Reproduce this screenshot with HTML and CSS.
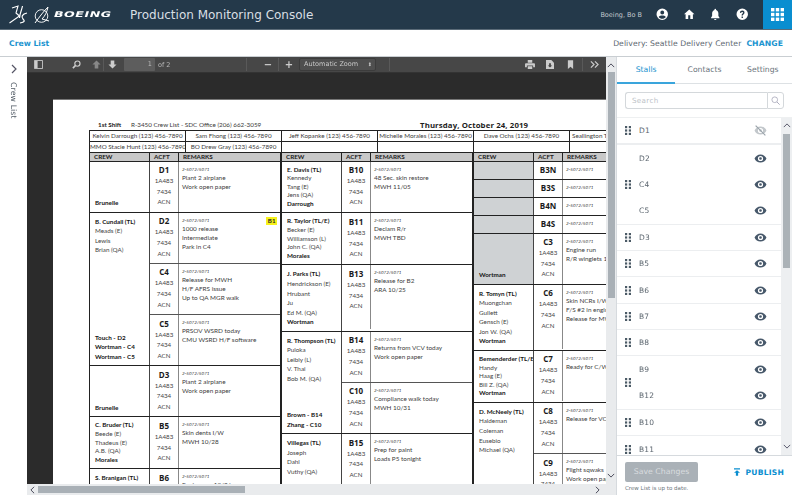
FILE: index.html
```html
<!DOCTYPE html>
<html lang="en">
<head>
<meta charset="utf-8">
<title>Production Monitoring Console</title>
<link rel="stylesheet" href="styles.css">
</head>
<body>
<svg class="defs" width="0" height="0" aria-hidden="true">
  <symbol id="eye" viewBox="0 0 24 24"><path fill="currentColor" d="M12 4.500C7 4.500 2.700 7.600 1 12c1.700 4.400 6 7.500 11 7.500s9.300-3.100 11-7.500c-1.700-4.400-6-7.500-11-7.500zm0 12.300a4.800 4.800 0 1 1 0-9.600 4.800 4.800 0 0 1 0 9.600zm0-7.300a2.500 2.500 0 1 0 0 5 2.500 2.500 0 0 0 0-5z"/></symbol>
  <symbol id="grip" viewBox="0 0 6 9"><g fill="currentColor"><rect width="2.200" height="2.200"/><rect x="3.800" width="2.200" height="2.200"/><rect y="3.400" width="2.200" height="2.200"/><rect x="3.800" y="3.400" width="2.200" height="2.200"/><rect y="6.800" width="2.200" height="2.200"/><rect x="3.800" y="6.800" width="2.200" height="2.200"/></g></symbol>
</svg>

<header class="topbar">
  <div class="brand">
    <svg class="logo-ds" viewBox="0 0 20 19"><path d="M4 3 10 1 8 8l3.500 3L1.500 18" fill="none" stroke="#fff" stroke-width="1.100"/><path d="M14.500 1C13.500 6 11.500 9 11.500 13M19 8c-5 1-6 4-4 6 2 2 2 3-3 4" fill="none" stroke="#fff" stroke-width="1.200"/></svg>
    <svg class="logo-b" viewBox="0 0 15 18"><circle cx="7.500" cy="10" r="6.300" fill="none" stroke="#fff" stroke-width=".9"/><path d="M1 17C6 10 10 5 14 1c-1 5-3 9-6 12l7 2" fill="none" stroke="#fff" stroke-width="1"/></svg>
    <span class="wordmark">BOEING</span>
  </div>
  <h1 class="app-title">Production Monitoring Console</h1>
  <span class="user-name">Boeing, Bo B</span>
  <nav class="top-icons">
    <svg viewBox="0 0 24 24"><path fill="#fff" d="M12 1a11 11 0 1 0 0 22 11 11 0 0 0 0-22zm0 4a3.700 3.700 0 1 1 0 7.400A3.700 3.700 0 0 1 12 5zm0 15.500c-2.800 0-5.300-1.300-6.900-3.400 1.300-1.700 4.400-2.600 6.900-2.600s5.600.9 6.900 2.600c-1.600 2.100-4.100 3.400-6.900 3.400z"/></svg>
    <svg viewBox="0 0 24 24"><path fill="#fff" d="M10 21v-7h4v7h5v-9h3L12 3 2 12h3v9z"/></svg>
    <svg viewBox="0 0 24 24"><path fill="#fff" d="M12 23a2.500 2.500 0 0 0 2.400-2H9.600a2.500 2.500 0 0 0 2.400 2zm8-5-2-2.500V10c0-3.100-1.900-5.600-4.500-6.300V3a1.500 1.500 0 0 0-3 0v.7C7.900 4.400 6 6.900 6 10v5.500L4 18v1.500h16z"/></svg>
    <svg viewBox="0 0 24 24"><path fill="#fff" d="M12 1a11 11 0 1 0 0 22 11 11 0 0 0 0-22zm1.300 18h-2.600v-2.600h2.600zm2.400-8c-.9 1.200-2.400 1.700-2.400 3.600h-2.600c0-3 1.900-3.700 2.700-4.800.6-.8.300-2.300-1.400-2.300-1.500 0-2 1.200-2.100 2.100L7.500 9c.3-2.300 2-4.100 4.500-4.100 3.900 0 5.300 3.700 3.700 6.100z"/></svg>
  </nav>
  <div class="app-tile">
    <svg viewBox="0 0 13 13"><g fill="#fff"><rect width="3.400" height="3.400"/><rect x="4.800" width="3.400" height="3.400"/><rect x="9.600" width="3.400" height="3.400"/><rect y="4.800" width="3.400" height="3.400"/><rect x="4.800" y="4.800" width="3.400" height="3.400"/><rect x="9.600" y="4.800" width="3.400" height="3.400"/><rect y="9.600" width="3.400" height="3.400"/><rect x="4.800" y="9.600" width="3.400" height="3.400"/><rect x="9.600" y="9.600" width="3.400" height="3.400"/></g></svg>
  </div>
</header>

<div class="subbar">
  <a class="crumb">Crew List</a>
  <span class="delivery">Delivery: Seattle Delivery Center</span>
  <a class="change">CHANGE</a>
</div>

<main class="workspace">
  <aside class="rail">
    <svg class="rail-chevron" viewBox="0 0 8 10"><path d="M2 1l4 4-4 4" fill="none" stroke="#556" stroke-width="1.200"/></svg>
    <span class="rail-label">Crew List</span>
  </aside>

  <section class="viewer">
    <div class="pdf-bar">
      <svg class="pi pi-side" viewBox="0 0 10 10"><path fill="none" stroke="#ccc" d="M.5.5h9v9h-9z"/><path fill="#ccc" d="M1 1h3v8H1z"/></svg>
      <svg class="pi pi-find" viewBox="0 0 10 10"><circle cx="6" cy="4" r="2.900" fill="none" stroke="#ccc" stroke-width="1.300"/><path d="M4 6 1 9" stroke="#ccc" stroke-width="1.800"/></svg>
      <svg class="pi pi-up" viewBox="0 0 10 10"><path fill="#888" d="M5 .5 9.500 5H7v4.500H3V5H.5z"/></svg>
      <i class="pdf-sep"></i>
      <svg class="pi pi-down" viewBox="0 0 10 10"><path fill="#ccc" d="M5 9.500 9.500 5H7V.5H3V5H.5z"/></svg>
      <span class="page-input">1</span>
      <span class="page-of">of 2</span>
      <i class="pdf-sep sep-zoom"></i>
      <span class="zoom-btn zoom-minus">−</span>
      <i class="pdf-sep"></i>
      <span class="zoom-btn">+</span>
      <span class="zoom-select">Automatic Zoom<b>⬍</b></span>
      <i class="pdf-sep sep-right"></i>
      <svg class="pi pi-print" viewBox="0 0 11 10"><path fill="#ccc" d="M3 0h5v3H3zM1 3.500h9a1 1 0 0 1 1 1V8H9V6H2v2H0V4.500a1 1 0 0 1 1-1zM3 7h5v3H3z"/></svg>
      <svg class="pi pi-save" viewBox="0 0 9 10"><path fill="#ccc" d="M0 0h6l3 3v7H0z"/><path fill="#444" d="M3.500 3.500h2V6H7L4.500 8.500 2 6h1.500z"/></svg>
      <svg class="pi pi-mark" viewBox="0 0 8 10"><path fill="#ccc" d="M1 0h6v10L4 7.500 1 10z"/></svg>
      <i class="pdf-sep"></i>
      <svg class="pi pi-more" viewBox="0 0 10 10"><path d="M1 1.500 4.500 5 1 8.500M5.500 1.500 9 5 5.500 8.500" fill="none" stroke="#ccc" stroke-width="1.300"/></svg>
    </div>

    <div class="pdf-area">
      <article class="sheet">
        <div class="sheet-title">
          <b class="shift">1st Shift</b>
          <span class="list-name">R-3450 Crew List - SDC Office (206) 662-3059</span>
          <b class="sheet-date">Thursday, October 24, 2019</b>
        </div>
        <div class="contacts">
          <div class="contact-row">
            <span class="c1">Kelvin Darrough (123) 456-7890</span><span class="c2">Sam Fhong (123) 456-7890</span><span class="c3">Jeff Kopanke (123) 456-7890</span><span class="c4">Michelle Morales (123) 456-7890</span><span class="c5">Dave Ochs (123) 456-7890</span><span class="c6">Seallington T</span>
          </div>
          <div class="contact-row">
            <span class="c1">MMO Stacie Hunt (123) 456-7890</span><span class="c2">BO Drew Gray (123) 456-7890</span><span class="c3"></span><span class="c4"></span><span class="c5"></span><span class="c6"></span>
          </div>
        </div>
        <div class="board">
          <div class="col">
            <div class="col-head"><span>CREW</span><span>ACFT</span><span>REMARKS</span></div>

            <div class="group">
              <div class="crew"><i class="sp"></i><b>Brunelle</b></div>
              <div class="stalls">
                <div class="stall">
                  <div class="acft"><b>D1</b><span>1A483</span><span>7434</span><span>ACN</span></div>
                  <div class="rem"><em>2-5072/5071</em><span>Plant 2 airplane</span><span>Work open paper</span></div>
                </div>
              </div>
            </div>

            <div class="group">
              <div class="crew crew-wide"><b>B. Cundall (TL)</b><span>Meads (E)</span><span>Lewis</span><span>Brian (QA)</span><i class="sp"></i><b>Touch - D2</b><b>Wortman - C4</b><b>Wortman - C5</b></div>
              <div class="stalls">
                <div class="stall">
                  <div class="acft"><b>D2</b><span>1A483</span><span>7434</span><span>ACN</span></div>
                  <div class="rem"><em>2-5072/5071</em><mark>B1</mark><span>1000 release</span><span>Intermediate</span><span>Park in C4</span></div>
                </div>
                <div class="stall">
                  <div class="acft"><b>C4</b><span>1A483</span><span>7434</span><span>ACN</span></div>
                  <div class="rem"><em>2-5072/5071</em><span>Release for MWH</span><span>H/F AFRS issue</span><span>Up to QA MGR walk</span></div>
                </div>
                <div class="stall">
                  <div class="acft"><b>C5</b><span>1A483</span><span>7434</span><span>ACN</span></div>
                  <div class="rem"><em>2-5072/5071</em><span>PRSOV WSRD today</span><span>CMU WSRD H/F software</span></div>
                </div>
              </div>
            </div>

            <div class="group">
              <div class="crew"><i class="sp"></i><b>Brunelle</b></div>
              <div class="stalls">
                <div class="stall">
                  <div class="acft"><b>D3</b><span>1A483</span><span>7434</span><span>ACN</span></div>
                  <div class="rem"><em>2-5072/5071</em><span>Plant 2 airplane</span><span>Work open paper</span></div>
                </div>
              </div>
            </div>

            <div class="group">
              <div class="crew"><b>C. Bruder (TL)</b><span>Beede (E)</span><span>Thadeus (E)</span><span>A.B. (QA)</span><b>Morales</b></div>
              <div class="stalls">
                <div class="stall">
                  <div class="acft"><b>B5</b><span>1A483</span><span>7434</span><span>ACN</span></div>
                  <div class="rem"><em>2-5072/5071</em><span>Skin dents I/W</span><span>MWH 10/28</span></div>
                </div>
              </div>
            </div>

            <div class="group">
              <div class="crew crew-wide"><b>S. Branigan (TL)</b><span>Edwards</span></div>
              <div class="stalls">
                <div class="stall">
                  <div class="acft"><b>B6</b><span>1A483</span></div>
                  <div class="rem"><em>2-5072/5071</em><span>Engine run 10/26</span></div>
                </div>
              </div>
            </div>
          </div>

          <div class="col">
            <div class="col-head"><span>CREW</span><span>ACFT</span><span>REMARKS</span></div>

            <div class="group">
              <div class="crew"><b>E. Davis (TL)</b><span>Kennedy</span><span>Tang (E)</span><span>Jens (QA)</span><b>Darrough</b></div>
              <div class="stalls">
                <div class="stall">
                  <div class="acft"><b>B10</b><span>1A483</span><span>7434</span><span>ACN</span></div>
                  <div class="rem"><em>2-5072/5071</em><span>48 Sec. skin restore</span><span>MWH 11/05</span></div>
                </div>
              </div>
            </div>

            <div class="group">
              <div class="crew"><b>R. Taylor (TL/E)</b><span>Becker (E)</span><span>Williamson (L)</span><span>John C. (QA)</span><b>Morales</b></div>
              <div class="stalls">
                <div class="stall">
                  <div class="acft"><b>B11</b><span>1A483</span><span>7434</span><span>ACN</span></div>
                  <div class="rem"><em>2-5072/5071</em><span>Declam R/r</span><span>MWH TBD</span></div>
                </div>
              </div>
            </div>

            <div class="group">
              <div class="crew crew-wide"><b>J. Parks (TL)</b><span>Hendrickson (E)</span><span>Hrubant</span><span>Ju</span><span>Ed M. (QA)</span><b>Wortman</b></div>
              <div class="stalls">
                <div class="stall stall-tall">
                  <div class="acft"><b>B13</b><span>1A483</span><span>7434</span><span>ACN</span></div>
                  <div class="rem"><em>2-5072/5071</em><span>Release for B2</span><span>ARA 10/25</span></div>
                </div>
              </div>
            </div>

            <div class="group">
              <div class="crew crew-wide"><b>R. Thompson (TL)</b><span>Puloka</span><span>Leibly (L)</span><span>V. Thai</span><span>Bob M. (QA)</span><i class="sp"></i><b>Brown - B14</b><b>Zhang - C10</b></div>
              <div class="stalls">
                <div class="stall">
                  <div class="acft"><b>B14</b><span>1A483</span><span>7434</span><span>ACN</span></div>
                  <div class="rem"><em>2-5072/5071</em><span>Returns from VCV today</span><span>Work open paper</span></div>
                </div>
                <div class="stall">
                  <div class="acft"><b>C10</b><span>1A483</span><span>7434</span><span>ACN</span></div>
                  <div class="rem"><em>2-5072/5071</em><span>Compliance walk today</span><span>MWH 10/31</span></div>
                </div>
              </div>
            </div>

            <div class="group">
              <div class="crew crew-wide"><b>Villegas (TL)</b><span>Joseph</span><span>Dahl</span><span>Vuthy (QA)</span></div>
              <div class="stalls">
                <div class="stall">
                  <div class="acft"><b>B15</b><span>1A483</span><span>7434</span><span>ACN</span></div>
                  <div class="rem"><em>2-5072/5071</em><span>Prep for paint</span><span>Loads P5 tonight</span></div>
                </div>
              </div>
            </div>
          </div>

          <div class="col col-last">
            <div class="col-head"><span>CREW</span><span>ACFT</span><span>REMARKS</span></div>

            <div class="group">
              <div class="crew crew-grey"></div>
              <div class="stalls">
                <div class="stall stall-short"><div class="acft"><b>B3N</b></div><div class="rem"><em>2-5072/5071</em></div></div>
              </div>
            </div>
            <div class="group">
              <div class="crew crew-grey"></div>
              <div class="stalls">
                <div class="stall stall-short"><div class="acft"><b>B3S</b></div><div class="rem"><em>2-5072/5071</em></div></div>
              </div>
            </div>
            <div class="group">
              <div class="crew crew-grey"></div>
              <div class="stalls">
                <div class="stall stall-short"><div class="acft"><b>B4N</b></div><div class="rem"><em>2-5072/5071</em></div></div>
              </div>
            </div>
            <div class="group">
              <div class="crew crew-grey"></div>
              <div class="stalls">
                <div class="stall stall-short"><div class="acft"><b>B4S</b></div><div class="rem"><em>2-5072/5071</em></div></div>
              </div>
            </div>
            <div class="group">
              <div class="crew crew-grey"><i class="sp"></i><b>Wortman</b></div>
              <div class="stalls">
                <div class="stall">
                  <div class="acft"><b>C3</b><span>1A483</span><span>7434</span><span>ACN</span></div>
                  <div class="rem"><em>2-5072/5071</em><span>Engine run</span><span>R/R winglets 10/26</span></div>
                </div>
              </div>
            </div>
            <div class="group">
              <div class="crew crew-wide"><b>R. Tomyn (TL)</b><span>Muongchan</span><span>Gullett</span><span>Gensch (E)</span><span>Jon W. (QA)</span><b>Wortman</b></div>
              <div class="stalls">
                <div class="stall stall-tall">
                  <div class="acft"><b>C6</b><span>1A483</span><span>7434</span><span>ACN</span></div>
                  <div class="rem"><em>2-5072/5071</em><span>Skin NCRs I/W today</span><span>F/S #2 in engine run</span><span>Release for MWH</span></div>
                </div>
              </div>
            </div>
            <div class="group">
              <div class="crew"><b>Bemenderder (TL/E)</b><span>Handy</span><span>Haag (E)</span><span>Bill Z. (QA)</span><b>Wortman</b></div>
              <div class="stalls">
                <div class="stall">
                  <div class="acft"><b>C7</b><span>1A483</span><span>7434</span><span>ACN</span></div>
                  <div class="rem"><em>2-5072/5071</em><span>Ready for C/W</span></div>
                </div>
              </div>
            </div>
            <div class="group">
              <div class="crew crew-wide"><b>D. McNeely (TL)</b><span>Haldeman</span><span>Coleman</span><span>Eusebio</span><span>Michael (QA)</span></div>
              <div class="stalls">
                <div class="stall">
                  <div class="acft"><b>C8</b><span>1A483</span><span>7434</span><span>ACN</span></div>
                  <div class="rem"><em>2-5072/5071</em><span>Release for VCV</span></div>
                </div>
                <div class="stall">
                  <div class="acft"><b>C9</b><span>1A483</span><span>7434</span><span>ACN</span></div>
                  <div class="rem"><em>2-5072/5071</em><span>Flight sqwaks</span><span>Work open paper</span><span>Fit. MWH 11/1</span></div>
                </div>
              </div>
            </div>
          </div>
        </div>
      </article>
    </div>

    <div class="vbar"><svg class="sb-arrow" viewBox="0 0 10 6"><path d="M1 5l4-4 4 4" fill="none" stroke="#445" stroke-width="1.200"/></svg><i class="vthumb"></i><svg class="sb-arrow sb-end" viewBox="0 0 10 6"><path d="M1 1l4 4 4-4" fill="none" stroke="#445" stroke-width="1.200"/></svg></div>
    <div class="hbar"><svg class="hb-arrow" viewBox="0 0 6 10"><path d="M5 1 1 5l4 4" fill="none" stroke="#445" stroke-width="1.200"/></svg><i class="hthumb"></i><svg class="hb-arrow hb-end" viewBox="0 0 6 10"><path d="M1 1l4 4-4 4" fill="none" stroke="#445" stroke-width="1.200"/></svg></div>
  </section>

  <aside class="panel">
    <div class="tabs">
      <span class="tab tab-on">Stalls</span>
      <span class="tab">Contacts</span>
      <span class="tab">Settings</span>
    </div>
    <div class="search">
      <span class="search-field">Search</span>
      <span class="search-btn"><svg viewBox="0 0 12 12"><circle cx="5" cy="5" r="3.800" fill="none" stroke="#aab" stroke-width="1.100"/><path d="M8 8l3.500 3.500" stroke="#aab" stroke-width="1.300"/></svg></span>
    </div>
    <div class="stall-list">
      <div class="rows">
        <div class="row row-line row-first"><svg class="grip"><use href="#grip"/></svg><span class="stall-name">D1</span>
          <svg class="eye eye-off" viewBox="0 0 24 24"><use href="#eye"/><path d="M3 3l18 18" stroke="#9aa3aa" stroke-width="2.200"/></svg></div>
        <div class="row-group">
          <svg class="grip"><use href="#grip"/></svg>
          <div class="row"><span class="stall-name">D2</span><svg class="eye"><use href="#eye"/></svg></div>
          <div class="row"><span class="stall-name">C4</span><svg class="eye"><use href="#eye"/></svg></div>
          <div class="row"><span class="stall-name">C5</span><svg class="eye"><use href="#eye"/></svg></div>
        </div>
        <div class="row row-line"><svg class="grip"><use href="#grip"/></svg><span class="stall-name">D3</span><svg class="eye"><use href="#eye"/></svg></div>
        <div class="row row-line"><svg class="grip"><use href="#grip"/></svg><span class="stall-name">B5</span><svg class="eye"><use href="#eye"/></svg></div>
        <div class="row row-line"><svg class="grip"><use href="#grip"/></svg><span class="stall-name">B6</span><svg class="eye"><use href="#eye"/></svg></div>
        <div class="row row-line"><svg class="grip"><use href="#grip"/></svg><span class="stall-name">B7</span><svg class="eye"><use href="#eye"/></svg></div>
        <div class="row row-line"><svg class="grip"><use href="#grip"/></svg><span class="stall-name">B8</span><svg class="eye"><use href="#eye"/></svg></div>
        <div class="row-group">
          <svg class="grip"><use href="#grip"/></svg>
          <div class="row"><span class="stall-name">B9</span><svg class="eye"><use href="#eye"/></svg></div>
          <div class="row"><span class="stall-name">B12</span><svg class="eye"><use href="#eye"/></svg></div>
        </div>
        <div class="row row-line"><svg class="grip"><use href="#grip"/></svg><span class="stall-name">B10</span><svg class="eye"><use href="#eye"/></svg></div>
        <div class="row"><svg class="grip"><use href="#grip"/></svg><span class="stall-name">B11</span><svg class="eye"><use href="#eye"/></svg></div>
      </div>
      <div class="list-bar"><svg class="lb-arrow" viewBox="0 0 10 6"><path d="M1 5l4-4 4 4" fill="none" stroke="#556" stroke-width="1.200"/></svg><i class="list-thumb"></i><svg class="lb-arrow lb-end" viewBox="0 0 10 6"><path d="M1 1l4 4 4-4" fill="none" stroke="#556" stroke-width="1.200"/></svg></div>
    </div>
    <div class="panel-foot">
      <div class="foot-actions">
        <span class="save-btn">Save Changes</span>
        <span class="publish"><svg viewBox="0 0 8 10"><path fill="#0a8ed0" d="M0 0h8v1.500H0zM4 2.500 8 6H5.500v4h-3V6H0z"/></svg>PUBLISH</span>
      </div>
      <div class="foot-note">Crew List is up to date.</div>
    </div>
  </aside>
</main>
</body>
</html>
```

FILE: styles.css
```css
* { box-sizing: border-box; }
html, body { margin: 0; height: 100%; }
body {
  width: 792px; height: 495px; overflow: hidden;
  display: flex; flex-direction: column;
  font-family: "DejaVu Sans", sans-serif; color: #4a5560; background: #fff;
  filter: blur(.3px);
}
.defs { position: absolute; }

/* top bar */
.topbar { height: 30px; flex: none; display: flex; align-items: center; background: #24394a; border-bottom: 1px solid #5b6b78; color: #fff; }
.brand { display: flex; align-items: center; margin-left: 8px; width: 122px; flex: none; }
.logo-ds { width: 20px; height: 19px; flex: none; }
.logo-b { width: 15px; height: 18px; margin-left: 6px; flex: none; }
.wordmark { font: italic 700 7.800px "DejaVu Sans", sans-serif; letter-spacing: .3px; margin-left: 5px; transform: scaleX(1.620); transform-origin: left center; }
.app-title { margin: 0; font: 400 12px "DejaVu Sans", sans-serif; color: #d9dfe4; white-space: nowrap; }
.user-name { margin-left: auto; font-size: 6.500px; color: #c3cad0; }
.top-icons { display: flex; align-items: center; gap: 14px; margin-left: 14px; margin-right: 15px; }
.top-icons svg { width: 12.500px; height: 12.500px; display: block; }
.app-tile { width: 29px; height: 29px; background: #0a8ed0; display: flex; align-items: center; justify-content: center; flex: none; }
.app-tile svg { width: 13px; height: 13px; }

/* sub bar */
.subbar { height: 27px; flex: none; display: flex; align-items: center; padding: 0 9px; background: #fff; border-bottom: 1px solid #c9ced2; font-size: 7.700px; }
.crumb { color: #1b94cf; font-weight: 700; }
.delivery { margin-left: auto; color: #5e6871; letter-spacing: .06px; }
.change { margin-left: 5px; color: #1b94cf; font-weight: 700; letter-spacing: .1px; }

/* main */
.workspace { flex: 1; min-height: 0; display: flex; }
.rail { width: 27px; flex: none; display: flex; flex-direction: column; align-items: center; background: #fff; padding-top: 7px; }
.rail-chevron { width: 8px; height: 10px; }
.rail-label { writing-mode: vertical-rl; font-size: 7.800px; color: #4f5963; margin-top: 8px; letter-spacing: .1px; }

/* viewer */
.viewer { width: 589px; flex: none; display: grid; grid-template-columns: 579px 10px; grid-template-rows: 16px 411px 11px; min-height: 0; }
.pdf-bar { grid-column: 1; grid-row: 1; display: flex; align-items: center; background: #474747; border-bottom: 1px solid #333; padding-left: 7px; color: #ccc; }
.pi { flex: none; display: block; height: 9px; width: 9px; }
.pdf-sep { width: 1px; height: 13px; background: #595959; flex: none; margin: 0 2px; }
.pi-find { margin-left: 29px; }
.pi-up { margin-left: 11px; }
.pi-down { margin-left: 2px; }
.page-input { margin-left: 7px; width: 31px; height: 13px; background: #5d5d5d; border-radius: 1px; font-size: 6.500px; line-height: 13px; text-align: right; padding-right: 3px; color: #bbb; }
.page-of { margin-left: 3px; font-size: 6.500px; color: #b8b8b8; width: 86px; }
.zoom-btn { width: 16px; text-align: center; font-size: 10px; font-weight: 700; color: #ccc; line-height: 13px; }
.zoom-minus { margin-left: 11px; }
.zoom-select { margin-left: 2px; width: 77px; height: 13px; background: #4f4f4f; border: 1px solid #3c3c3c; border-radius: 2px; font-size: 6.500px; line-height: 11px; padding: 0 3px 0 4px; color: #c8c8c8; display: flex; justify-content: space-between; }
.zoom-select b { font-size: 5px; font-weight: 400; }
.sep-right { margin-left: 13px; }
.pi-print { margin-left: 133px; width: 10px; }
.pi-save { margin-left: 11px; width: 8px; }
.pi-mark { margin-left: 13px; width: 7px; }
.pi-mark + .pdf-sep { margin-left: 8px; }
.pi-more { margin-left: 5px; }

.pdf-area { grid-column: 1; grid-row: 2; background: #2b2b2b; overflow: hidden; padding: 26px 0 0 26px; min-height: 0; }
.sheet { width: 700px; height: 460px; background: #fff; border-top: 1px solid #777; padding: 20px 0 0 36px; font-family: Lato, "Open Sans", sans-serif; color: #3c3c3c; font-size: 6.300px; }

.sheet-title { display: flex; height: 9px; align-items: center; color: #333; margin-bottom: 1px; }
.shift { font-size: 6.300px; color: #222; width: 33px; margin-left: 9px; flex: none; }
.list-name { font-size: 6.300px; width: 289px; color: #3a3a3a; flex: none; }
.sheet-date { font: 700 7.800px "Open Sans", sans-serif; color: #1d1d1d; letter-spacing: .12px; }

.contacts { width: 560px; border: 1px solid #222; border-right: 0; }
.contact-row { display: flex; height: 10px; }
.contact-row + .contact-row { height: 11px; border-top: 1px solid #222; }
.contact-row span { border-right: 1px solid #222; text-align: center; font-size: 6.300px; line-height: 10px; white-space: nowrap; overflow: hidden; flex: none; }
.c1, .c2, .c3, .c4, .c5 { width: 96px; }
.contact-row .c6 { width: 80px; border-right: 0; text-align: left; padding-left: 2px; }

.board { display: flex; align-items: flex-start; margin-top: -1px; }
.col { width: 192px; flex: none; border-left: 1px solid #222; }
.col-head { display: grid; grid-template-columns: 60px 29px 1fr; height: 9.500px; background: #c8c8c8; border-top: 1px solid #222; border-bottom: 1px solid #222; font-weight: 700; color: #222; font-size: 6.300px; line-height: 8px; }
.col-head span { padding-left: 4px; border-right: 1px solid #222; }
.group { display: flex; border-bottom: 1px solid #222; border-right: 1px solid #222; }
.crew { width: 60px; flex: none; display: flex; flex-direction: column; padding: 4px 3px 4px 5px; border-right: 1px solid #444; line-height: 8.600px; color: #444; white-space: nowrap; overflow: hidden; }
.crew-wide { line-height: 9.550px; }
.crew b { color: #151515; font-weight: 700; }
.crew .sp { flex: 1; }
.crew-grey { background: #cfd2d4; }
.stalls { flex: 1; min-width: 0; }
.stall { display: flex; height: 51.200px; }
.stall:first-child { height: 50.200px; }
.stall + .stall { border-top: 1px solid #555; }
.stall.stall-short { height: 17px; }
.stall.stall-tall { height: 64px; }
.acft { width: 29px; flex: none; display: flex; flex-direction: column; align-items: center; border-right: 1px solid #888; padding-top: 2.500px; line-height: 10.700px; color: #444; font-size: 6.200px; }
.acft b { font: 700 8px/12px "Open Sans", sans-serif; color: #1a1a1a; }
.stall-short .acft { padding-top: 2px; }
.rem { flex: 1; position: relative; display: flex; flex-direction: column; padding: 4px 0 0 3px; line-height: 9px; color: #404040; white-space: nowrap; min-width: 0; overflow: hidden; font-size: 6.400px; }
.rem em { font-size: 4.600px; line-height: 7px; color: #333; }
.rem mark { position: absolute; top: 4.500px; right: 3px; background: #f7f21a; color: #222; font-weight: 700; font-size: 6.200px; line-height: 8px; padding: 0 1.500px; }

/* pdf scrollbars */
.vbar { grid-column: 2; grid-row: 1 / span 2; background: #e9ebed; display: flex; flex-direction: column; align-items: center; padding-top: 6px; }
.sb-arrow { width: 8px; height: 5px; flex: none; }
.sb-end { margin-top: auto; margin-bottom: 6px; }
.vthumb { display: block; width: 7px; height: 226px; background: #a9b0b6; margin-top: 4px; flex: none; }
.hbar { grid-column: 1 / span 2; grid-row: 3; background: #e9ebed; display: flex; align-items: center; padding: 0 16px 0 3px; }
.hb-arrow { width: 5px; height: 8px; flex: none; }
.hb-end { margin-left: auto; }
.hthumb { display: block; width: 207px; height: 7px; background: #a9b0b6; margin-left: 3px; }

/* side panel */
.panel { width: 176px; flex: none; display: flex; flex-direction: column; border-left: 1px solid #d6dade; background: #fff; }
.tabs { height: 27px; flex: none; display: flex; border-bottom: 1px solid #dde1e4; font-size: 7.700px; }
.tab { flex: 1; text-align: center; line-height: 25px; color: #6b757d; }
.tab-on { color: #1b94cf; border-bottom: 2px solid #3aa5dc; height: 27px; }
.search { height: 34px; flex: none; display: flex; padding: 8px 8px 0 8px; border-bottom: 1px solid #eef0f1; }
.search-field { flex: 1; height: 17px; border: 1px solid #d4d8db; border-right: 0; border-radius: 3px 0 0 3px; font-size: 7.200px; line-height: 15px; padding-left: 6px; color: #bcc2c7; letter-spacing: .3px; }
.search-btn { width: 17px; height: 17px; border: 1px solid #d4d8db; border-radius: 0 3px 3px 0; display: flex; align-items: center; justify-content: center; }
.search-btn svg { width: 9px; height: 9px; }
.stall-list { flex: 1; min-height: 0; display: flex; overflow: hidden; }
.rows { flex: 1; min-width: 0; }
.row { height: 26.300px; display: flex; align-items: center; padding: 0 14px 0 22px; position: relative; }
.row-line { border-bottom: 1px solid #eceef0; }
.row-first { height: 27px; border-bottom-width: 2px; }
.row-group { position: relative; border-bottom: 1px solid #eceef0; }
.grip { width: 6px; height: 9px; color: #4b5a66; position: absolute; left: 8px; top: 50%; margin-top: -4.500px; }
.stall-name { font-size: 7.500px; color: #5b656e; letter-spacing: .2px; }
.eye { width: 13px; height: 13px; margin-left: auto; color: #47586a; }
.eye-off { color: #c2c7cb; }
.list-bar { width: 11px; flex: none; background: #edeff1; display: flex; flex-direction: column; align-items: center; padding-top: 5px; }
.lb-arrow { width: 8px; height: 5px; flex: none; }
.lb-end { margin-top: auto; margin-bottom: 6px; }
.list-thumb { display: block; width: 7px; height: 134px; background: #abb2b7; margin-top: 6px; flex: none; }
.panel-foot { height: 40px; flex: none; border-top: 1px solid #d6dade; padding: 6px 8px 0 8px; background: #fff; }
.foot-actions { display: flex; align-items: center; justify-content: space-between; }
.save-btn { width: 73px; height: 20px; background: #aab1b7; border-radius: 2px; font-size: 7.800px; line-height: 20px; text-align: center; color: #d9dcdf; }
.publish { display: flex; align-items: center; color: #0a8ed0; font-weight: 700; font-size: 7.600px; letter-spacing: .2px; }
.publish svg { width: 6px; height: 8px; margin-right: 6px; }
.foot-note { font-size: 5.500px; color: #6c757c; margin-top: 3px; line-height: 7px; }
```
